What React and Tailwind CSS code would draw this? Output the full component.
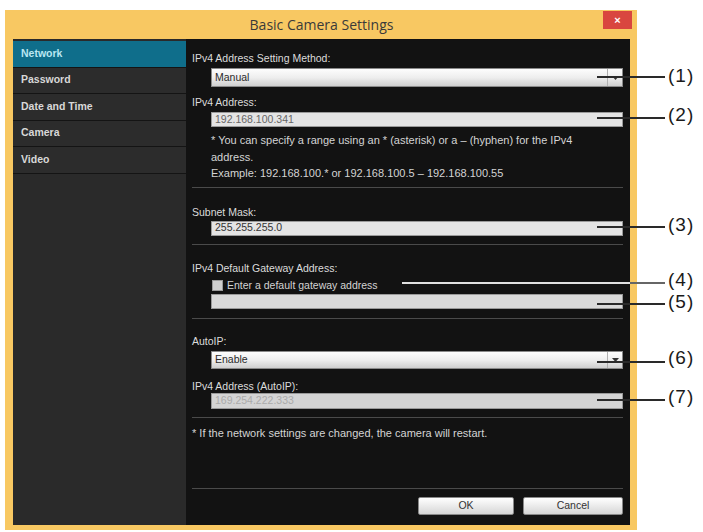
import React from "react";

const font = { fontFamily: '"Liberation Sans", Arial, sans-serif' };

function Label({ children, className = "" }) {
  return (
    <div className={"text-[10.5px] text-[#dcdcdc] leading-[14px] whitespace-nowrap " + className}>{children}</div>
  );
}

function Select({ value, className = "", h = "h-[19px]" }) {
  return (
    <div className={"ml-[19px] flex items-stretch border border-[#8a8a8a] bg-gradient-to-b from-[#fdfdfd] via-[#eeeeee] to-[#cfcfcf] " + h + " " + className}>
      <div className="flex-1 flex items-center pl-[3px] text-[10.5px] text-[#2a2a2a]">{value}</div>
      <div className="w-[15px] border-l border-[#b0b0b0] flex items-center justify-center">
        <svg width="7" height="4" viewBox="0 0 7 4"><path d="M0 0 L7 0 L3.5 4 Z" fill="#333" /></svg>
      </div>
    </div>
  );
}

function Input({ value, className = "", text = "text-[#555]", bg = "bg-[#e4e4e4]", h = "h-[15px]" }) {
  return (
    <div className={"ml-[19px] flex items-center pl-[3px] border border-[#9a9a9a] text-[10.5px] " + bg + " " + text + " " + h + " " + className}>
      {value}
    </div>
  );
}

function Sep({ className = "" }) {
  return <div className={"h-px bg-[#4a4a4a] " + className} />;
}

const navItems = ["Network", "Password", "Date and Time", "Camera", "Video"];

function Num({ n, top }) {
  return (
    <div className="absolute text-[19px] leading-[22px] tracking-[1px] text-[#1a1a1a]" style={{ top, left: 668 }}>({n})</div>
  );
}

function Callout({ n, top, left = 597, textTop }) {
  return (
    <>
      <div className="absolute h-[2px] bg-[#2a2a2a]" style={{ top, left, width: 665 - left }} />
      <Num n={n} top={textTop} />
    </>
  );
}

export default function App() {
  return (
    <div className="relative w-[703px] h-[532px] bg-white overflow-hidden" style={font}>
      <div className="ml-[5px] mt-[10px] w-[632px] h-[520px] bg-[#f8c862] flex flex-col pl-[8px] pr-[7px] pb-[5px]">
        <div className="relative h-[29px] flex items-center justify-center">
          <span className="text-[14px] text-[#3a3a3a]" style={{ fontFamily: '"Open Sans", "Noto Sans", sans-serif' }}>Basic Camera Settings</span>
          <div className="absolute right-[-2px] top-[1px] w-[29px] h-[18px] bg-[#d9463f] flex items-center justify-center text-white text-[11px] font-bold leading-none">×</div>
        </div>
        <div className="flex-1 flex bg-[#121212]">
          <div className="w-[173px] bg-[#2a2a2a] flex flex-col pt-[2px]">
            {navItems.map((item, i) => (
              <div
                key={item}
                className={
                  "h-[26.5px] flex items-center pl-[8px] text-[10.5px] font-semibold border-b border-[#141414] " +
                  (i === 0 ? "bg-[#0f6e8b] text-[#b9e6f2]" : "bg-[#2c2c2c] text-[#d8d8d8]")
                }
              >
                {item}
              </div>
            ))}
          </div>
          <div className="flex-1 flex flex-col pl-[6px] pr-[7px]">
            <Label className="mt-[12px]">IPv4 Address Setting Method:</Label>
            <Select value="Manual" className="mt-[3px]" />
            <Label className="mt-[8px]">IPv4 Address:</Label>
            <Input value="192.168.100.341" className="mt-[3px]" text="text-[#666]" />
            <div className="ml-[19px] mt-[5px] text-[11px] leading-[16.5px] text-[#d4d4d4] whitespace-nowrap">
              <div>* You can specify a range using an * (asterisk) or a – (hyphen) for the IPv4</div>
              <div>address.</div>
              <div>Example: 192.168.100.* or 192.168.100.5 – 192.168.100.55</div>
            </div>
            <Sep className="mt-[5px]" />
            <Label className="mt-[17px]">Subnet Mask:</Label>
            <Input value="255.255.255.0" className="mt-[2px]" text="text-[#333]" />
            <Sep className="mt-[8px]" />
            <Label className="mt-[16px]">IPv4 Default Gateway Address:</Label>
            <div className="ml-[20px] mt-[4px] h-[14px] flex items-center gap-[4px]">
              <div className="w-[11px] h-[11px] bg-[#cfcfcf] border border-[#9a9a9a]" />
              <span className="text-[10.5px] text-[#d4d4d4]">Enter a default gateway address</span>
            </div>
            <Input value="" className="mt-[1px]" bg="bg-[#dadada]" />
            <Sep className="mt-[9px]" />
            <Label className="mt-[15px]">AutoIP:</Label>
            <Select value="Enable" className="mt-[3px]" h="h-[18px]" />
            <Label className="mt-[10px]">IPv4 Address (AutoIP):</Label>
            <Input value="169.254.222.333" className="mt-[0px]" text="text-[#ababab]" bg="bg-[#d4d4d4]" h="h-[16px]" />
            <Sep className="mt-[8px]" />
            <div className="mt-[8px] text-[11px] leading-[14px] text-[#d4d4d4] whitespace-nowrap">* If the network settings are changed, the camera will restart.</div>
            <Sep className="mt-auto" />
            <div className="mt-[8px] mb-[10px] flex justify-end gap-[9px]">
              <div className="w-[96px] h-[18px] rounded-[2px] bg-gradient-to-b from-[#ffffff] to-[#d6d6d6] border border-[#888] flex items-center justify-center text-[10.5px] text-[#333]">OK</div>
              <div className="w-[100px] h-[18px] rounded-[2px] bg-gradient-to-b from-[#ffffff] to-[#d6d6d6] border border-[#888] flex items-center justify-center text-[10.5px] text-[#333]">Cancel</div>
            </div>
          </div>
        </div>
      </div>

      <Callout n={1} top={76} textTop={65} />
      <Callout n={2} top={117} textTop={104} />
      <Callout n={3} top={226} textTop={214} />
      <div className="absolute h-[2px] bg-[#e0e0e0]" style={{ top: 282, left: 402, width: 228 }} />
      <div className="absolute h-[2px] bg-[#666]" style={{ top: 282, left: 630, width: 35 }} />
      <Num n={4} top={269} />
      <Callout n={5} top={303} textTop={291} />
      <Callout n={6} top={361} textTop={347} />
      <Callout n={7} top={399} textTop={386} />
    </div>
  );
}
